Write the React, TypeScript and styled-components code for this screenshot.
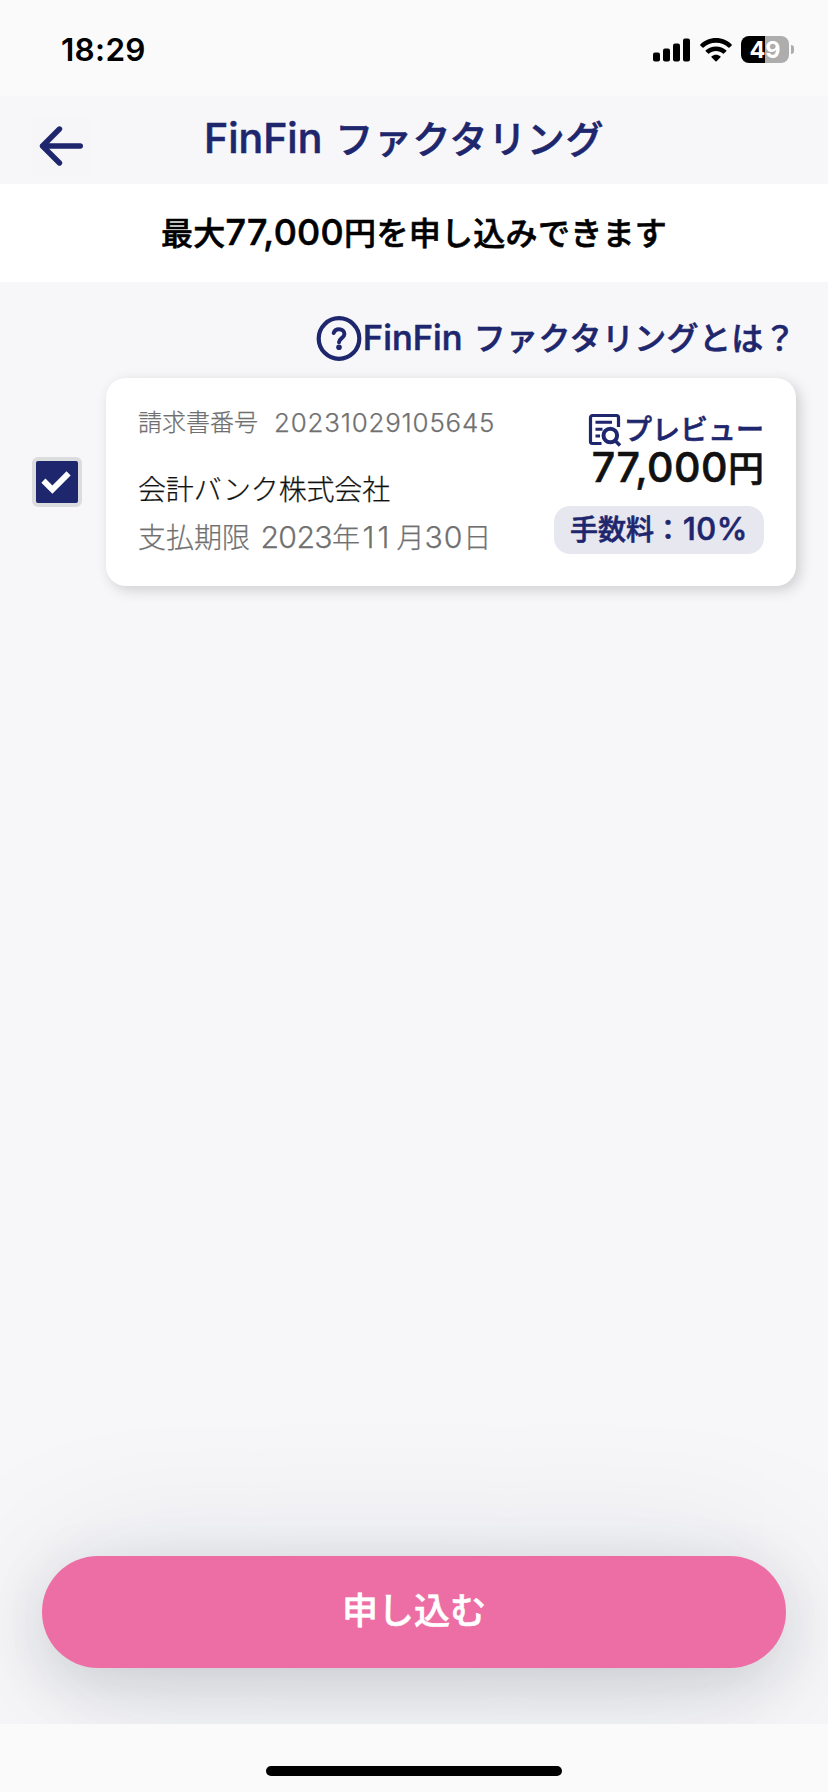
import React, { useState } from "react";
import styled, { createGlobalStyle, css } from "styled-components";

const navy = "#1e266d";

const GlobalStyle = createGlobalStyle`
  *, *::before, *::after { box-sizing: border-box; }
  html, body { margin: 0; padding: 0; }
  body {
    background: #fafafa;
    font-family: Inter, "Noto Sans CJK JP", sans-serif;
    -webkit-font-smoothing: antialiased;
  }
  button { font: inherit; border: 0; padding: 0; cursor: pointer; }
`;

const Screen = styled.div`
  width: 828px;
  height: 1792px;
  display: flex;
  flex-direction: column;
  overflow: hidden;
  background: #fafafa;
`;

const StatusBar = styled.div`
  height: 96px;
  flex: none;
  display: flex;
  justify-content: space-between;
  align-items: center;
  padding: 3px 34px 0 61px;
`;

const Clock = styled.time`
  font-size: 31.5px;
  font-weight: 600;
  line-height: 38px;
  letter-spacing: 0.3px;
  color: #000;
`;

const StatusIcons = styled.div`
  display: flex;
  align-items: center;
  gap: 10px;
`;

const Battery = styled.div`
  display: flex;
  align-items: center;
  gap: 2px;
  margin-left: -1px;
`;

const BatteryBody = styled.div`
  width: 48px;
  height: 27px;
  border-radius: 8px;
  background: linear-gradient(to right, #000 50%, #adadad 50%);
  color: #fff;
  font-size: 23.5px;
  font-weight: 700;
  line-height: 27px;
  text-align: center;
`;

const BatteryCap = styled.div`
  width: 3px;
  height: 9px;
  border-radius: 0 4px 4px 0;
  background: #adadad;
`;

const Body = styled.main`
  flex: 1;
  display: flex;
  flex-direction: column;
  overflow: hidden;
  background: #f7f7fa;
`;

const Header = styled.header`
  height: 88px;
  flex: none;
  display: grid;
  grid-template-columns: 60px 1fr 60px;
  padding: 0 32px;
`;

const BackButton = styled.button`
  width: 60px;
  height: 60px;
  margin-top: 20px;
  background: #f6f6f9;
`;

const strong = css`
  font-weight: 500;
  -webkit-text-stroke: 0.6px currentColor;
`;

const Title = styled.h1`
  ${strong}
  margin: 0 0 0 -20px;
  font-size: 38px;
  line-height: 84px;
  letter-spacing: 0.6px;
  word-spacing: 2px;
  text-align: center;
  white-space: nowrap;
  color: ${navy};
`;

interface LatinProps {
  $size?: number;
  $track?: number;
  $before?: number;
  $after?: number;
}

const Latin = styled.span<LatinProps>`
  font-size: ${(p) => p.$size ?? 1.08}em;
  letter-spacing: ${(p) => p.$track ?? 0}em;
  margin: 0 ${(p) => p.$after ?? 0}px 0 ${(p) => p.$before ?? 0}px;
`;

const Banner = styled.p`
  ${strong}
  height: 98px;
  flex: none;
  margin: 0;
  background: #fff;
  color: #000;
  font-size: 32px;
  line-height: 96px;
  letter-spacing: 0.3px;
  text-align: center;
  white-space: nowrap;
`;

const HelpLink = styled.button`
  ${strong}
  align-self: flex-end;
  height: 48px;
  margin: 32px 32px 0 0;
  display: flex;
  align-items: center;
  background: none;
  color: ${navy};
  font-size: 32px;
  line-height: 48px;
  letter-spacing: 0.35px;
  white-space: nowrap;
`;

const HelpLabel = styled.span`
  height: 49px;
  word-spacing: 2px;
`;

const InvoiceRow = styled.div`
  margin-top: 16px;
  padding: 0 32px;
  display: flex;
  align-items: center;
  gap: 24px;
`;

const Checkbox = styled.button<{ $checked: boolean }>`
  width: 50px;
  height: 50px;
  flex: none;
  border: 4px solid #dadcdd;
  border-radius: 6px;
  background: ${(p) => (p.$checked ? navy : "#fff")};
`;

const Card = styled.article`
  flex: 1;
  height: 208px;
  padding: 0 32px;
  display: flex;
  justify-content: space-between;
  border-radius: 20px;
  background: #fff;
  box-shadow: 4px 4px 14px rgba(0, 0, 0, 0.17);
`;

const Details = styled.div`
  padding-top: 25px;
  display: flex;
  flex-direction: column;
  white-space: nowrap;
`;

const lineStyle = css`
  margin: 0;
  font-weight: 300;
  -webkit-text-stroke: 0.25px currentColor;
  color: #707070;
`;

const InvoiceNumber = styled.p`
  ${lineStyle}
  display: flex;
  gap: 16px;
  font-size: 24px;
  line-height: 40px;
`;

const Company = styled.p`
  ${lineStyle}
  margin-top: 23px;
  font-size: 28px;
  line-height: 48px;
  letter-spacing: -0.15px;
  color: #111;
`;

const DueDate = styled.p`
  ${lineStyle}
  font-size: 28px;
  line-height: 46px;
  word-spacing: 2.5px;
`;

const Summary = styled.div`
  padding-top: 34px;
  display: flex;
  flex-direction: column;
  align-items: flex-end;
  white-space: nowrap;
`;

const Preview = styled.button`
  ${strong}
  display: flex;
  align-items: center;
  gap: 1px;
  height: 36px;
  background: none;
  color: ${navy};
  font-size: 28px;
  line-height: 36px;
`;

const PreviewLabel = styled.span`
  height: 37px;
`;

const Amount = styled.p`
  ${strong}
  margin: 0;
  height: 42px;
  font-size: 36px;
  line-height: 38px;
  color: #111;
`;

const Fee = styled.span`
  ${strong}
  margin-top: 16px;
  height: 48px;
  padding: 0 16px;
  border-radius: 16px;
  background: #e7e7f0;
  color: ${navy};
  font-size: 28px;
  line-height: 45px;
`;

const Footer = styled.footer`
  margin-top: auto;
  padding: 0 42px 56px;
`;

const ApplyButton = styled.button`
  ${strong}
  display: block;
  width: 100%;
  height: 112px;
  padding-bottom: 3px;
  border-radius: 56px;
  background: #ed6ea5;
  color: #fff;
  font-size: 36px;
  line-height: 104px;
  box-shadow: 0 10px 160px rgba(20, 30, 40, 0.12), 0 16px 60px rgba(20, 30, 40, 0.14);
`;

const HomeArea = styled.div`
  height: 68px;
  flex: none;
  display: flex;
  justify-content: center;
  padding-top: 42px;
  background: #fafafa;
`;

const HomeIndicator = styled.div`
  width: 296px;
  height: 10px;
  border-radius: 5px;
  background: #000;
`;

const SignalIcon = () => (
  <svg width="37" height="24" viewBox="0 0 37 24">
    <rect x="0" y="14.5" width="7" height="9" rx="2" />
    <rect x="10" y="10.5" width="7" height="13" rx="2" />
    <rect x="20" y="5.5" width="7" height="18" rx="2" />
    <rect x="30" y="0.5" width="7" height="23" rx="2" />
  </svg>
);

const WifiIcon = () => (
  <svg width="32" height="24" viewBox="0 0 32 24">
    <path d="M16 0C22.2 0 27.8 2.5 31.7 6.4c.3.3.3.7 0 1L29.5 9.6c-.3.3-.8.3-1.1 0C25.2 6.6 20.9 4.7 16 4.7S6.8 6.6 3.6 9.6c-.3.3-.8.3-1.1 0L.3 7.4c-.3-.3-.3-.7 0-1C4.2 2.5 9.8 0 16 0Z" />
    <path d="M16 8.4c4 0 7.5 1.5 10.2 3.9.4.3.4.7.1 1l-2.4 2.3c-.3.3-.7.3-1 0C21.1 14 18.7 13 16 13s-5.1 1-6.9 2.6c-.3.3-.7.3-1 0l-2.4-2.3c-.3-.3-.3-.7.1-1C8.5 9.9 12 8.4 16 8.4Z" />
    <path d="M16 16.7c1.7 0 3.2.6 4.4 1.5.3.3.4.7.1 1l-3.9 4c-.3.3-.8.3-1.1 0l-4-4c-.3-.3-.2-.7.1-1 1.2-.9 2.7-1.5 4.4-1.5Z" />
  </svg>
);

const BackIcon = () => (
  <svg width="60" height="60" viewBox="0 0 60 60" fill="none" stroke={navy} strokeWidth="5.4" strokeLinecap="round" strokeLinejoin="round" display="block">
    <path d="M27.5 13 10.5 30l17 17M10.5 30h37.8" />
  </svg>
);

const HelpIcon = () => (
  <svg width="48" height="48" viewBox="0 0 48 48" fill="none" stroke={navy}>
    <circle cx="24" cy="24.5" r="20.3" strokeWidth="4.2" />
    <path d="M18.7 19c.8-2.5 2.8-3.7 5.3-3.7 3 0 5.4 1.8 5.4 4.7 0 4-5.4 4.3-5.4 8.3" strokeWidth="4" strokeLinecap="round" strokeLinejoin="round" />
    <circle cx="24" cy="33.2" r="2.8" fill={navy} stroke="none" />
  </svg>
);

const CheckIcon = () => (
  <svg width="42" height="42" viewBox="0 0 42 42" fill="none" stroke="#fff" strokeWidth="5.8" display="block">
    <path d="M7.4 19.6l9 9L32.6 12.4" />
  </svg>
);

const PreviewIcon = () => (
  <svg width="36" height="36" viewBox="0 0 36 36" fill="none" stroke={navy}>
    <path d="M14.5 31.5H5.5a2 2 0 0 1-2-2v-24a2 2 0 0 1 2-2h24a2 2 0 0 1 2 2V15" strokeWidth="3.2" />
    <path d="M8.5 10.2h16.5M8.5 17.2h7M8.5 24h4.5" strokeWidth="3" />
    <circle cx="23.3" cy="23.5" r="6.8" strokeWidth="4" />
    <path d="M28 28.5l5 5" strokeWidth="3.6" />
  </svg>
);

export default function App() {
  const [selected, setSelected] = useState(true);
  return (
    <Screen>
      <GlobalStyle />
      <StatusBar>
        <Clock>18:29</Clock>
        <StatusIcons>
          <SignalIcon />
          <WifiIcon />
          <Battery>
            <BatteryBody>49</BatteryBody>
            <BatteryCap />
          </Battery>
        </StatusIcons>
      </StatusBar>
      <Body>
        <Header>
          <BackButton aria-label="戻る">
            <BackIcon />
          </BackButton>
          <Title>
            <Latin>FinFin </Latin>ファクタリング
          </Title>
        </Header>
        <Banner>
          最大
          <Latin $size={1.12} $track={0.01}>77,000</Latin>
          円を申し込みできます
        </Banner>
        <HelpLink>
          <HelpIcon />
          <HelpLabel>
            <Latin>FinFin </Latin>ファクタリングとは？
          </HelpLabel>
        </HelpLink>
        <InvoiceRow>
          <Checkbox
            role="checkbox"
            aria-checked={selected}
            $checked={selected}
            onClick={() => setSelected(!selected)}
          >
            {selected && <CheckIcon />}
          </Checkbox>
          <Card>
            <Details>
              <InvoiceNumber>
                <span>請求書番号</span>
                <Latin $track={0.031}>20231029105645</Latin>
              </InvoiceNumber>
              <Company>会計バンク株式会社</Company>
              <DueDate>
                支払期限 <Latin $track={-0.02}>2023</Latin>年
                <Latin $track={0.1} $before={2.5} $after={4}>11</Latin>月
                <Latin $track={0.03}>30</Latin>日
              </DueDate>
            </Details>
            <Summary>
              <Preview>
                <PreviewIcon />
                <PreviewLabel>プレビュー</PreviewLabel>
              </Preview>
              <Amount>
                <Latin $size={1.14} $track={0.012}>77,000</Latin>円
              </Amount>
              <Fee>
                手数料：<Latin $size={1.1} $track={0.02} $before={1}>10%</Latin>
              </Fee>
            </Summary>
          </Card>
        </InvoiceRow>
        <Footer>
          <ApplyButton>申し込む</ApplyButton>
        </Footer>
      </Body>
      <HomeArea>
        <HomeIndicator />
      </HomeArea>
    </Screen>
  );
}
